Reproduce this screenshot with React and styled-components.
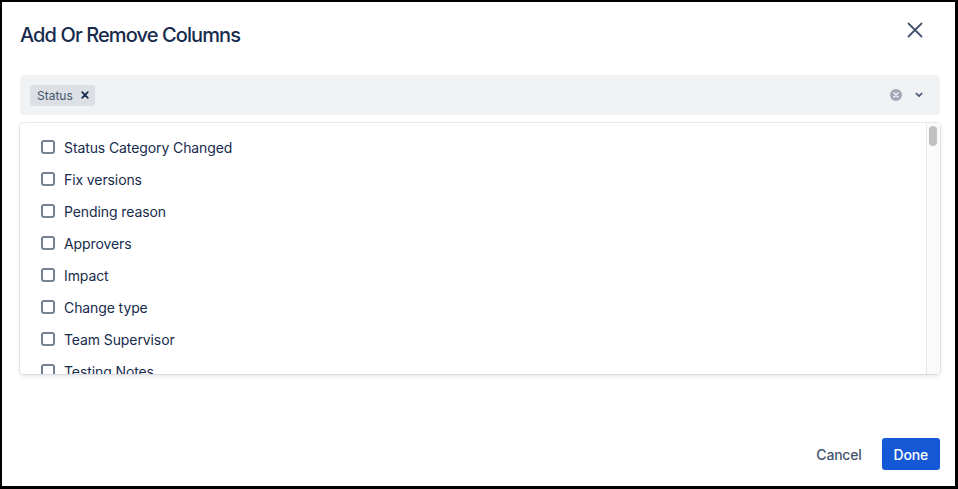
import React from "react";
import styled, { createGlobalStyle } from "styled-components";

const Global = createGlobalStyle`
  html, body { margin: 0; padding: 0; background: #fff; }
  body { font-family: Inter, "Noto Sans", "Liberation Sans", sans-serif; color: #172B4D; }
  * { box-sizing: border-box; }
`;

const Frame = styled.div`
  width: 958px;
  height: 489px;
  border-style: solid;
  border-color: #000;
  border-width: 2px 3px 3px 2px;
  background: #fff;
  display: flex;
  flex-direction: column;
  padding: 0 15px 0 18px;
`;

const Header = styled.div`
  display: flex;
  align-items: center;
  justify-content: space-between;
  padding-top: 20px;
  height: 45px;
`;

const Title = styled.h1`
  margin: 0;
  font-size: 20px;
  line-height: 24px;
  font-weight: 500;
  color: #172B4D;
  letter-spacing: -0.9px;
`;

const CloseButton = styled.button`
  width: 24px;
  height: 24px;
  border: none;
  background: none;
  padding: 0;
  margin: 0 13px 9px 0;
  display: flex;
  align-items: center;
  justify-content: center;
  color: #44546F;
  cursor: pointer;
`;

const Control = styled.div`
  margin-top: 28px;
  height: 40px;
  background: #F1F2F4;
  border-radius: 4px;
  display: flex;
  align-items: center;
  padding: 0 17px 0 10px;
`;

const Tags = styled.div`
  flex: 1;
  display: flex;
  gap: 4px;
`;

const Tag = styled.span`
  display: inline-flex;
  align-items: center;
  height: 21px;
  padding: 0 6px 0 7px;
  background: #DCDFE4;
  border-radius: 3px;
  font-size: 12px;
  color: #44546F;
  gap: 8px;
`;

const TagRemove = styled.span`
  display: inline-flex;
  color: #172B4D;
`;

const Indicators = styled.div`
  display: flex;
  align-items: center;
  gap: 13px;
`;

const Menu = styled.div`
  margin-top: 8px;
  height: 251px;
  background: #fff;
  border-radius: 4px;
  box-shadow: 0 0 0 1px rgba(9, 30, 66, 0.08), 0 2px 5px rgba(9, 30, 66, 0.12);
  display: flex;
  overflow: hidden;
`;

const List = styled.div`
  flex: 1;
  overflow: hidden;
  padding: 8px 0;
`;

const ScrollTrack = styled.div`
  width: 14px;
  flex: none;
  background: #FAFAFA;
  border-left: 1px solid #E8E8E8;
  padding: 3px 2px 0 2px;
`;

const ScrollThumb = styled.div`
  width: 8px;
  height: 20px;
  border-radius: 4px;
  background: #C1C1C1;
`;

const Option = styled.label`
  display: flex;
  align-items: center;
  height: 32px;
  padding-left: 21px;
  gap: 9px;
  font-size: 14px;
  color: #172B4D;
  letter-spacing: -0.1px;
  white-space: nowrap;
`;

const Box = styled.span`
  width: 14px;
  height: 14px;
  border: 2px solid #758195;
  border-radius: 3px;
  flex: none;
`;

const Footer = styled.div`
  margin-top: auto;
  margin-bottom: 16px;
  display: flex;
  justify-content: flex-end;
  align-items: center;
  gap: 8px;
`;

const Button = styled.button`
  height: 32px;
  padding: 0 12px;
  border: none;
  border-radius: 3px;
  font-family: inherit;
  font-size: 14px;
  font-weight: 500;
  letter-spacing: -0.2px;
  cursor: pointer;
  background: ${(p) => (p.$primary ? "#1558D6" : "transparent")};
  color: ${(p) => (p.$primary ? "#fff" : "#44546F")};
`;

const fields = [
  "Status Category Changed",
  "Fix versions",
  "Pending reason",
  "Approvers",
  "Impact",
  "Change type",
  "Team Supervisor",
  "Testing Notes",
  "Affects versions",
  "Assignee",
  "Components",
  "Created",
  "Creator",
  "Description",
  "Due date",
  "Environment",
  "Issue type",
  "Key",
  "Labels",
  "Last viewed",
  "Linked issues",
  "Original estimate",
  "Parent",
  "Priority",
  "Progress",
  "Project",
  "Remaining Estimate",
  "Reporter",
  "Resolution",
  "Resolved",
  "Security level",
  "Sprint",
  "Story point estimate",
  "Sub-tasks",
  "Summary",
  "Time tracking",
  "Updated",
  "Votes",
  "Watchers",
  "Work ratio",
  "Actual end",
  "Actual start",
  "Approvals",
  "Change reason",
  "Change risk",
  "Change completion date",
  "Change start date",
  "Customer Request Type",
  "Development",
  "Epic Link",
  "Flagged",
  "Goals",
  "Major incident",
  "Operational categorization",
  "Organizations",
  "Product categorization",
  "Rank",
  "Request participants",
  "Request language",
  "Responders",
  "Satisfaction",
  "Satisfaction date",
  "Sentiment",
  "Severity",
  "Source",
  "Start date",
  "Target end",
  "Target start",
  "Team",
  "Time to first response",
  "Time to resolution",
  "Urgency",
  "Vulnerability",
  "Affected services",
  "Category",
  "Backout plan",
  "Implementation plan",
  "Investigation reason",
  "Root cause",
  "Workaround",
  "Test plan",
  "Start time",
  "End time",
  "Location",
  "Asset",
  "Budget",
  "Cost",
  "Department",
];

const CloseIcon = () => (
  <svg width="16" height="16" viewBox="0 0 16 16" fill="none">
    <path d="M1.5 1.5L14.5 14.5M14.5 1.5L1.5 14.5" stroke="currentColor" strokeWidth="1.8" strokeLinecap="round" />
  </svg>
);

const SmallX = () => (
  <svg width="8" height="8" viewBox="0 0 8 8" fill="none">
    <path d="M1.2 1.2L6.8 6.8M6.8 1.2L1.2 6.8" stroke="currentColor" strokeWidth="1.7" strokeLinecap="round" />
  </svg>
);

const ClearIcon = () => (
  <svg width="12" height="12" viewBox="0 0 12 12">
    <circle cx="6" cy="6" r="6" fill="#A0A8B6" />
    <path d="M4 4L8 8M8 4L4 8" stroke="#F1F2F4" strokeWidth="1.6" strokeLinecap="round" />
  </svg>
);

const Chevron = () => (
  <svg width="8" height="6" viewBox="0 0 8 6" fill="none">
    <path d="M1.3 1.5L4 4.2L6.7 1.5" stroke="#44546F" strokeWidth="1.7" strokeLinecap="round" strokeLinejoin="round" />
  </svg>
);

export default function App() {
  return (
    <>
      <Global />
      <Frame>
        <Header>
          <Title>Add Or Remove Columns</Title>
          <CloseButton aria-label="Close">
            <CloseIcon />
          </CloseButton>
        </Header>
        <Control>
          <Tags>
            <Tag>
              Status
              <TagRemove>
                <SmallX />
              </TagRemove>
            </Tag>
          </Tags>
          <Indicators>
            <ClearIcon />
            <Chevron />
          </Indicators>
        </Control>
        <Menu>
          <List>
            {fields.map((f) => (
              <Option key={f}>
                <Box />
                {f}
              </Option>
            ))}
          </List>
          <ScrollTrack>
            <ScrollThumb />
          </ScrollTrack>
        </Menu>
        <Footer>
          <Button>Cancel</Button>
          <Button $primary>Done</Button>
        </Footer>
      </Frame>
    </>
  );
}
